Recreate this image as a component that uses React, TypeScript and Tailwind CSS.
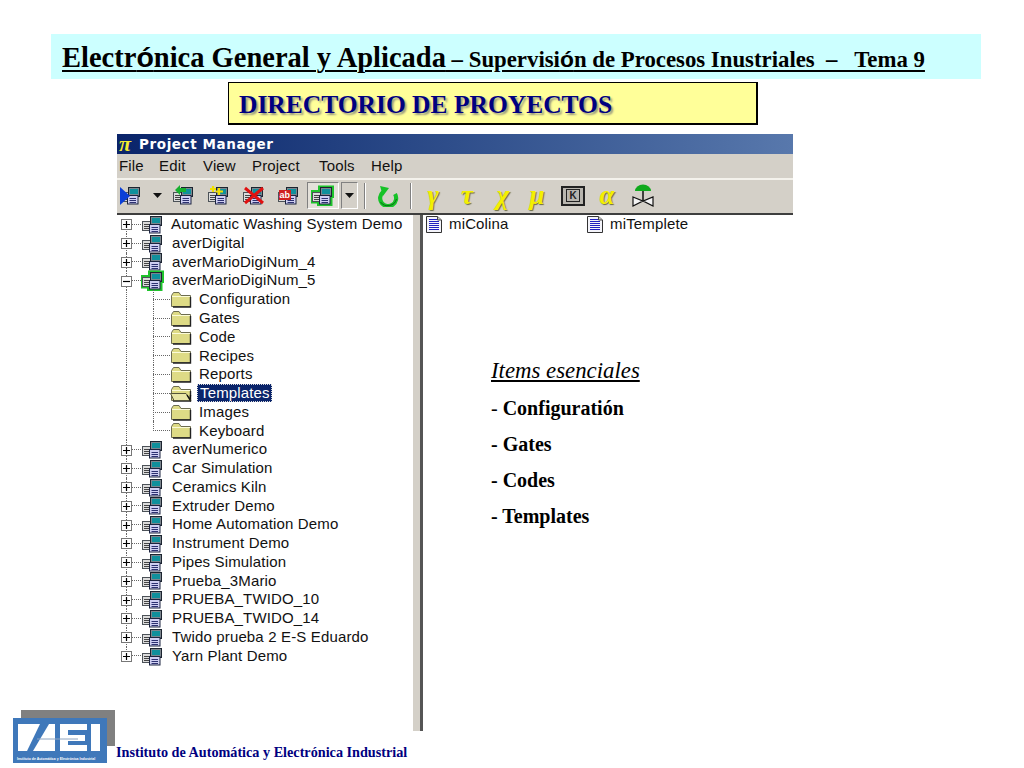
import React from "react";

const SANS = "font-['Liberation_Sans',Arial,sans-serif]";

function Proj({ green = false }: { green?: boolean }) {
  return (
    <svg width="24" height="21" viewBox="0 0 24 21" className="shrink-0">
      {green && <path d="M1 6 H8 V1.500 H22 V12 H20.500 V20 H7 V17.500 H1 Z" fill="#1fc42c" stroke="#1fc42c" strokeWidth="2" />}
      <rect x="1.500" y="7.500" width="8" height="9" fill="#dcdcdc" stroke="#4c5258" />
      <path d="M3 10.500h5M3 12.500h5M3 14.500h5" stroke="#444" />
      <rect x="9.500" y="2.500" width="11" height="9" fill="#7c868e" stroke="#1c2430" />
      <rect x="11" y="4" width="8" height="5" fill="#10909c" />
      <rect x="8.500" y="10.500" width="10.500" height="8.500" fill="#cfcff2" stroke="#1c2440" />
      <path d="M10.500 13.500h6.500M10.500 15.500h6.500M10.500 17.500h6.500" stroke="#2c3070" />
    </svg>
  );
}

function Folder({ open = false }: { open?: boolean }) {
  return (
    <svg width="22" height="17" viewBox="0 0 22 17" className="shrink-0">
      <path d="M1.500 4.500 L3.500 1.500 H9 L11 4.500 H20.500 V15.500 H1.500 Z" fill="#dedb86" stroke="#6c6c50" />
      <path d="M2 5.500 H20" stroke="#fbfbd8" />
      <path d="M20.500 6 V16 H3" stroke="#222" strokeWidth="1.400" fill="none" />
      {open && <path d="M0.500 8.500 H16 L21 15.500 H4 Z" fill="#e8e6a6" stroke="#55553a" />}
      {open && <path d="M17 10 L20 15 L20.500 10" fill="none" stroke="#111" strokeWidth="1.400" />}
    </svg>
  );
}

function Doc() {
  return (
    <svg width="18" height="19" viewBox="0 0 18 19" className="shrink-0">
      <path d="M1.500 1.500 H12.500 L16.500 5 V17.500 H1.500 Z" fill="#f4f4fa" stroke="#333" />
      <path d="M4 4.500h8M4 6.500h10M4 8.500h10M4 10.500h10M4 12.500h10M4 14.500h10" stroke="#2020c0" />
      <path d="M12.500 1.500 V5 H16.500" fill="#ccc" stroke="#444" />
    </svg>
  );
}

function Box({ minus = false }: { minus?: boolean }) {
  return (
    <span className="absolute left-[4px] top-1/2 -mt-[5px] flex h-[11px] w-[11px] items-center justify-center border border-[#777] bg-white">
      <svg width="9" height="9" viewBox="0 0 9 9">
        <path d={minus ? "M1 4.500h7" : "M1 4.500h7M4.500 1v7"} stroke="#000" strokeWidth="1.200" />
      </svg>
    </span>
  );
}

type Row = { t: string; kind: "root" | "open" | "sub" | "sel" };
const rows: Row[] = [
  { t: "Automatic Washing System Demo", kind: "root" },
  { t: "averDigital", kind: "root" },
  { t: "averMarioDigiNum_4", kind: "root" },
  { t: "averMarioDigiNum_5", kind: "open" },
  { t: "Configuration", kind: "sub" },
  { t: "Gates", kind: "sub" },
  { t: "Code", kind: "sub" },
  { t: "Recipes", kind: "sub" },
  { t: "Reports", kind: "sub" },
  { t: "Templates", kind: "sel" },
  { t: "Images", kind: "sub" },
  { t: "Keyboard", kind: "sub" },
  { t: "averNumerico", kind: "root" },
  { t: "Car Simulation", kind: "root" },
  { t: "Ceramics Kiln", kind: "root" },
  { t: "Extruder Demo", kind: "root" },
  { t: "Home Automation Demo", kind: "root" },
  { t: "Instrument Demo", kind: "root" },
  { t: "Pipes Simulation", kind: "root" },
  { t: "Prueba_3Mario", kind: "root" },
  { t: "PRUEBA_TWIDO_10", kind: "root" },
  { t: "PRUEBA_TWIDO_14", kind: "root" },
  { t: "Twido prueba 2 E-S Eduardo", kind: "root" },
  { t: "Yarn Plant Demo", kind: "root" },
];

function TreeRow({ r, i }: { r: Row; i: number }) {
  const isSub = r.kind === "sub" || r.kind === "sel";
  const first = i === 0;
  const last = i === rows.length - 1;
  const lastSub = r.t === "Keyboard";
  return (
    <div className="relative flex h-[18.78px] items-center">
      <span
        className={
          "absolute left-[9px] w-0 border-l border-dotted border-[#666] " +
          (first ? "top-1/2 bottom-0" : last ? "top-0 bottom-1/2" : "top-0 bottom-0")
        }
      />
      {isSub ? (
        <>
          <span
            className={
              "absolute left-[36px] w-0 border-l border-dotted border-[#666] " +
              (lastSub ? "top-0 bottom-1/2" : "top-0 bottom-0")
            }
          />
          <span className="ml-[36px] w-[17px] border-t border-dotted border-[#666]" />
          <Folder open={r.kind === "sel"} />
          {r.kind === "sel" ? (
            <span className="ml-[5px] border border-dotted border-[#ddd] bg-[#0a246a] pl-[2px] pr-[1px] leading-[16px] text-white">
              {r.t}
            </span>
          ) : (
            <span className="ml-[7px]">{r.t}</span>
          )}
        </>
      ) : (
        <>
          <Box minus={r.kind === "open"} />
          <span className="ml-[15px] w-[9px] border-t border-dotted border-[#666]" />
          <Proj green={r.kind === "open"} />
          <span className={first ? "ml-[6px]" : "ml-[7px]"}>{r.t}</span>
        </>
      )}
    </div>
  );
}

function Caret() {
  return (
    <svg width="9" height="5" viewBox="0 0 9 5">
      <path d="M0 0H9L4.500 5Z" fill="#111" />
    </svg>
  );
}

function Greek({ c }: { c: string }) {
  return (
    <span className="font-['Liberation_Serif',serif] text-[27px] font-bold italic leading-none text-[#f4f000] [text-shadow:1px_1px_1px_#6b6b40]">
      {c}
    </span>
  );
}

function Cell({ w, children }: { w: string; children: React.ReactNode }) {
  return <div className={w + " flex h-full shrink-0 items-center justify-center"}>{children}</div>;
}

function Toolbar() {
  return (
    <div className="flex h-[37px] shrink-0 items-center border-t-2 border-t-[#f4f2ec] border-b-2 border-b-[#3e3e3e] bg-[#d4d0c8] pb-[2px] tracking-normal">
      <Cell w="w-[28px]">
        <span className="relative flex">
          <Proj />
          <svg width="12" height="18" viewBox="0 0 12 18" className="absolute left-[0px] top-[2px]">
            <path d="M1 0 L11 9 L1 18 Z" fill="#0b3fd8" />
          </svg>
        </span>
      </Cell>
      <Cell w="w-[21px] pl-1"><Caret /></Cell>
      <Cell w="w-[35px]">
        <span className="relative flex">
          <Proj />
          <svg width="12" height="10" viewBox="0 0 12 10" className="absolute left-[3px] top-0">
            <path d="M0 5 L5 0 V3 H11 V7 H5 V10 Z" fill="#18b030" />
          </svg>
        </span>
      </Cell>
      <Cell w="w-[35px]">
        <span className="relative flex">
          <Proj />
          <svg width="14" height="11" viewBox="0 0 14 11" className="absolute left-[3px] top-0">
            <path d="M3 1V7M0 4H6M9 3V10M5.500 6.500H13" stroke="#f0e000" strokeWidth="2.200" />
          </svg>
        </span>
      </Cell>
      <Cell w="w-[35px]">
        <span className="relative flex">
          <Proj />
          <svg width="22" height="19" viewBox="0 0 22 19" className="absolute left-[1px] top-[1px]">
            <path d="M2 2 L20 17 M20 2 L2 17" stroke="#e01010" strokeWidth="3" />
          </svg>
        </span>
      </Cell>
      <Cell w="w-[35px]">
        <span className="relative flex">
          <Proj />
          <span className={SANS + " absolute left-[2px] top-[5px] bg-[#d02020] px-[1px] text-[9px] font-bold leading-[10px] text-white"}>
            ab
          </span>
        </span>
      </Cell>
      <div className="ml-[1px] flex h-[27px] w-[32px] shrink-0 items-center justify-center border border-b-white border-r-white border-l-[#808080] border-t-[#808080] bg-[#e4e1da]">
        <Proj green />
      </div>
      <div className="ml-[2px] flex h-[27px] w-[17px] shrink-0 items-center justify-center border border-b-white border-r-white border-l-[#808080] border-t-[#808080]">
        <Caret />
      </div>
      <div className="ml-[6px] h-[26px] w-[2px] shrink-0 border-l border-r border-l-[#808080] border-r-white" />
      <Cell w="w-[44px]">
        <svg width="24" height="22" viewBox="0 0 24 22">
          <path d="M7 7 A8 8 0 1 0 19 9" fill="none" stroke="#16c228" strokeWidth="4.200" />
          <path d="M4 1 L13 3 L7 11 Z" fill="#16c228" />
          <path d="M4.500 17 A9 9 0 0 0 20.500 14" fill="none" stroke="#0c6a18" strokeWidth="1" />
        </svg>
      </Cell>
      <div className="h-[26px] w-[2px] shrink-0 border-l border-r border-l-[#808080] border-r-white" />
      <Cell w="w-[42px]"><Greek c="γ" /></Cell>
      <Cell w="w-[26px]"><Greek c="τ" /></Cell>
      <Cell w="w-[46px]"><Greek c="χ" /></Cell>
      <Cell w="w-[22px]"><Greek c="μ" /></Cell>
      <Cell w="w-[50px]">
        <span className="flex h-[20px] w-[24px] items-center justify-center border-2 border-[#222] bg-[#b8b5ae]">
          <span className={SANS + " border border-[#222] px-[2px] text-[10px] font-bold leading-[11px] text-[#222]"}>K</span>
        </span>
      </Cell>
      <Cell w="w-[18px]"><Greek c="α" /></Cell>
      <Cell w="w-[54px]">
        <svg width="24" height="25" viewBox="0 0 24 25">
          <path d="M4 8 A8 6.500 0 0 1 20 8 Z" fill="#0fa91c" />
          <path d="M12 8V18" stroke="#111" strokeWidth="1.500" />
          <path d="M2 14 L12 18 L22 14 V23 L12 18 L2 23 Z" fill="#f4f4f4" stroke="#111" strokeWidth="1.200" />
        </svg>
      </Cell>
    </div>
  );
}

function Logo() {
  return (
    <div className="relative ml-[13px] h-[45px] w-[94px] shrink-0 bg-[#3f78ba]">
      <div className="absolute -right-[8px] -top-[8px] -z-10 h-[36px] w-[94px] bg-[#808080]" />
      <svg width="94" height="34" viewBox="0 0 94 34" className="absolute left-0 top-0">
        <path d="M5 6 H27 L14 33 H5 Z" fill="#fff" />
        <path d="M36 6 H42 V33 H20 Z" fill="#fff" />
        <path d="M47 6 H74 V12 H55 V17 H72 V23 H55 V27 H74 V33 H47 Z" fill="#fff" />
        <rect x="78" y="6" width="9" height="27" fill="#fff" />
        <path d="M24 21 H65" stroke="#8ea4c0" strokeWidth="1" />
      </svg>
      <span className={SANS + " absolute bottom-[2px] left-[4px] whitespace-nowrap text-[3.500px] font-bold leading-none text-white"}>
        Instituto de Automática y Electrónica Industrial
      </span>
    </div>
  );
}

export default function App() {
  const menu: [string, string][] = [
    ["File", "w-[40px]"],
    ["Edit", "w-[44px]"],
    ["View", "w-[49px]"],
    ["Project", "w-[67px]"],
    ["Tools", "w-[52px]"],
    ["Help", "w-[50px]"],
  ];
  return (
    <div className="relative isolate flex h-[768px] w-[1024px] flex-col overflow-hidden bg-white pt-[34px] font-['Liberation_Serif',serif] text-black">
      <div className="ml-[51px] flex h-[45px] w-[930px] items-center bg-[#ccffff] pl-[11px] pt-[3px] font-bold">
        <span className="whitespace-pre underline decoration-2 underline-offset-[3px]">
          <span className="text-[28.500px]">Electr</span>
          <span className={SANS + " text-[28.500px]"}>ó</span>
          <span className="text-[28.500px]">nica General y Aplicada</span>
          <span className="text-[22.800px]"> – Supervisi</span>
          <span className={SANS + " text-[22.800px]"}>ó</span>
          <span className="text-[22.800px]">n de Procesos Inustriales  –   Tema 9</span>
        </span>
      </div>

      <div className="ml-[228px] mt-[3px] flex h-[43px] w-[530px] items-center border border-b-2 border-r-2 border-black bg-[#ffff99] pl-[10px] pt-[4px] text-[25.500px] font-bold text-[#000080] [text-shadow:2px_2px_2px_#9a9a80]">
        DIRECTORIO DE PROYECTOS
      </div>

      <div className={SANS + " ml-[117px] mt-[9px] flex h-[597px] w-[676px] flex-col text-[15px] tracking-[0.15px] text-[#111]"}>
        <div className="flex h-[20px] shrink-0 items-center bg-gradient-to-r from-[#0a246a] to-[#5878ac] pl-[2px] font-['DejaVu_Sans',sans-serif] text-[13.500px] font-bold tracking-[0.6px] text-white">
          <span className="w-[20px] font-['Liberation_Serif',serif] text-[22px] italic leading-none text-[#f4ec30]">π</span>
          Project Manager
        </div>
        <div className="flex h-[24px] shrink-0 items-center bg-[#d4d0c8] pl-[2px]">
          {menu.map(([m, w]) => (
            <span key={m} className={w}>{m}</span>
          ))}
        </div>
        <Toolbar />
        <div className="flex min-h-0 flex-1">
          <div className="w-[296px] shrink-0 whitespace-nowrap">
            {rows.map((r, i) => (
              <TreeRow key={r.t} r={r} i={i} />
            ))}
          </div>
          <div className="w-[7px] shrink-0 bg-[#d4d0c8]" />
          <div className="w-[3px] shrink-0 bg-[#555]" />
          <div className="flex-1">
            <div className="flex h-[16px] items-center pl-[2px] pt-[2px]">
              <Doc />
              <span className="ml-[6px] w-[137px]">miColina</span>
              <Doc />
              <span className="ml-[6px]">miTemplete</span>
            </div>
            <div className="ml-[68px] mt-[127px] font-['Liberation_Serif',serif] tracking-normal text-black">
              <div className="text-[22.800px] italic leading-[26px] underline underline-offset-2">Items esenciales</div>
              <div className="mt-[6px] flex flex-col text-[20px] font-bold leading-[36px]">
                <span><span className="font-normal">- </span>Configuratión</span>
                <span>- Gates</span>
                <span>- Codes</span>
                <span>- Templates</span>
              </div>
            </div>
          </div>
        </div>
      </div>

      <div className="mt-[-13px] flex items-end">
        <Logo />
        <span className="mb-[3px] ml-[9px] text-[14.200px] font-bold leading-[16px] text-[#000080]">
          Instituto de Automática y Electrónica Industrial
        </span>
      </div>
    </div>
  );
}
